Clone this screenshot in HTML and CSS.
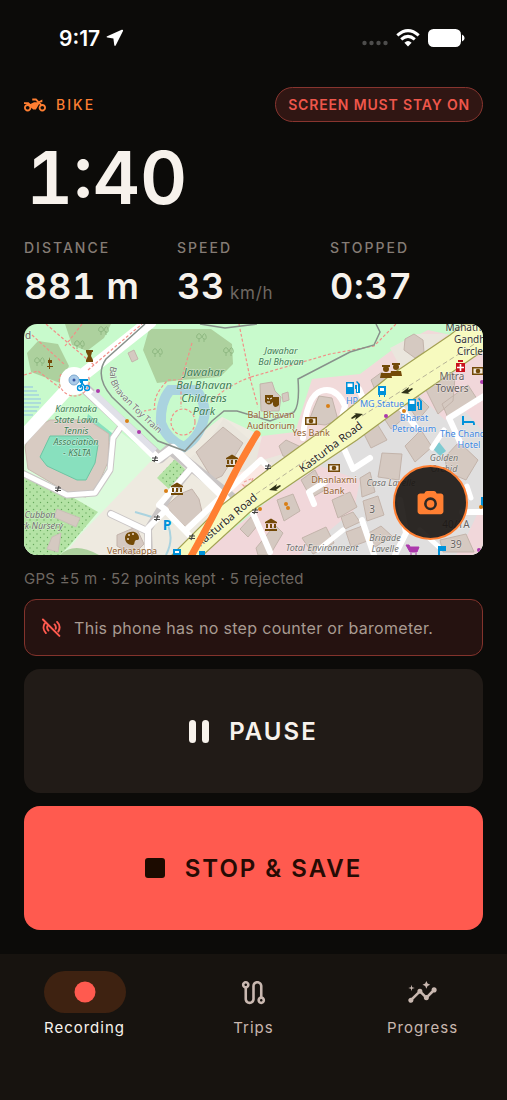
FILE: index.html
```
<!DOCTYPE html>
<html lang="en">
<head>
  <meta charset="UTF-8" />
  <meta name="viewport" content="width=device-width, initial-scale=1.0"/>
  <title>Recording</title>
  <link rel="stylesheet" href="styles.css">
</head>
<body>

<div class="status-bar">
  <div class="clock">
    9:17
    <svg width="18" height="18" viewBox="0 0 18 18"><path d="M15.700 .8 1.200 7.300q-1.300.8.200 1.300l6 .9.900 6.700q.6 1.500 1.500.1L17 2Q17.400.3 15.700.8z" fill="#fff"/></svg>
  </div>
  <div class="signals">
    <svg width="26" height="18" viewBox="0 0 26 18" fill="#4e4d4c">
      <circle cx="2.500" cy="14" r="2.200"/><circle cx="9.500" cy="14" r="2.200"/><circle cx="16.500" cy="14" r="2.200"/><circle cx="23.500" cy="14" r="2.200"/>
    </svg>
    <svg width="24" height="18" viewBox="0 0 24 18" fill="none" stroke="#fff" stroke-width="3">
      <path d="M1.300 6.400Q12-3.200 22.700 6.400M5.200 10.400Q12 4.400 18.800 10.400"/>
      <path d="M8.400 13.800Q12 10.200 15.600 13.800L12 17.600z" fill="#fff" stroke="none"/>
    </svg>
    <svg width="37" height="18" viewBox="0 0 37 18" fill="#fff"><rect width="33" height="18" rx="5.500"/><path d="M34 5.500q2.600 1 2.600 3.500T34 12.500z"/></svg>
  </div>
</div>

<main class="screen">
  <div class="top-row">
    <div class="mode">
      <svg width="22" height="22" viewBox="0 0 24 24" fill="currentColor"><path d="M20 11c-.18 0-.36.03-.53.05L17.410 9H20V6l-3.720 1.860L13.410 5H9v2h3.590l2 2H11l-4 2-2-2H0v2h4c-2.210 0-4 1.790-4 4s1.790 4 4 4 4-1.790 4-4l2 2h3l3.490-6.100 1.010 1.010C16.590 12.640 16 13.750 16 15c0 2.210 1.790 4 4 4s4-1.790 4-4-1.790-4-4-4zM4 17c-1.100 0-2-.9-2-2s.9-2 2-2 2 .9 2 2-.9 2-2 2zm16 0c-1.100 0-2-.9-2-2s.9-2 2-2 2 .9 2 2-.9 2-2 2z"/></svg>
      BIKE
    </div>
    <div class="badge">SCREEN MUST STAY ON</div>
  </div>

  <div class="timer">1:40</div>

  <div class="stats">
    <div class="stat"><div class="label">DISTANCE</div><div class="value">881 m</div></div>
    <div class="stat"><div class="label">SPEED</div><div class="value">33<span class="unit">km/h</span></div></div>
    <div class="stat"><div class="label">STOPPED</div><div class="value">0:37</div></div>
  </div>

  <div class="map">
    <svg class="map-tiles" viewBox="24 324 459 231" preserveAspectRatio="xMidYMid slice">
      <defs>
        <pattern id="plants" width="7" height="7" patternUnits="userSpaceOnUse"><rect width="7" height="7" fill="#b4e3a5"/><circle cx="2" cy="2" r=".7" fill="#66a85c"/><circle cx="5.500" cy="5.500" r=".7" fill="#66a85c"/></pattern>
        <g id="museum" fill="#734a08"><path d="M-6-3 0-6.500 6-3v1.300H-6zM-5-1h2v4h-2zM-1-1h2v4h-2zM3-1h2v4H3zM-6 4H6v2H-6z"/></g>
        <g id="bank"><rect x="-6" y="-4" width="12" height="8" fill="#734a08"/><rect x="-4.500" y="-2.500" width="9" height="5" fill="#f4e9dc"/><circle r="2.300" fill="#734a08"/></g>
        <g id="fuel" fill="#0092da"><path d="M-6-6h8V6h-8zM3-3h2v7h1v-8L4-6l1-1 3 3v9H4V1H3z"/><path d="M-4.500-4.500h5V-1h-5z" fill="#fff"/></g>
        <g id="gate" stroke="#444" stroke-width="1.200"><path d="M-3-1h6M-3 1.500h6M-1 3 1-3"/></g>
        <g id="tree" fill="none" stroke="#8fb882"><path d="M0 4V0M0 1q-4-1-2-4t4 0-2 4M5 4V1q-3-1-1-4t3 1-2 3"/></g>
        <path id="train-line" d="M111 366Q106 380 118 394 134 412 168 442"/>
      </defs>

      <!-- land -->
      <rect x="24" y="324" width="460" height="231" fill="#c8facc"/>
      <path d="M118 430 160 463 80 555H24V430z" fill="#dcfbdc"/>
      <path d="M24 470 60 490 98 512 70 545 60 555H24z" fill="url(#plants)"/>
      <path d="M150 462 80 535 64 555H200L290 470 260 435 222 417 180 450z" fill="#eeeae0"/>
      <path d="M205 446 224 418 250 440 300 452 265 486 232 500 185 462z" fill="#eae6dd"/>
      <path d="M157 478 175 459 190 474 170 490z" fill="url(#plants)"/>
      <path d="M60 555q14-14 39 0z" fill="#add19e"/>
      <path d="M200 555 300 476 484 345V555z" fill="#e0dfdf"/>
      <path d="M256 462 262 436 295 432 312 379 360 374 400 344 428 330 455 336 330 440z" fill="#f1dada"/>
      <path d="M390 348 417 334 448 334 402 370z" fill="#eae6dd"/>
      <path d="M202 555 265 503 320 466 360 480 354 510 300 555zM420 396 462 364 484 350V432L462 408 445 420z" fill="#f1d7da"/>
      <path d="M465 540 484 500V555H456z" fill="#f1d7da"/>
      <path d="M229 476 272 462 258 480 235 498z" fill="#fbe8e4"/>

      <!-- woods and water -->
      <g fill="#add19e">
        <path d="M27 353 38 341 58 344 69 366 60 383 31 372z"/>
        <path d="M65 324H111L104 338 87 351 72 345z"/>
        <path d="M149 329H211L232 344 233 364 220 377 181 380 157 383 143 350z"/>
      </g>
      <use href="#tree" x="37" y="362"/><use href="#tree" x="77" y="345"/><use href="#tree" x="101" y="331"/><use href="#tree" x="155" y="353"/><use href="#tree" x="199" y="338"/><use href="#tree" x="226" y="352"/>
      <path d="M170 390Q160 402 161 423 167 440 184 447 202 436 205 412 203 397 196 390z" fill="#c8facc" stroke="#aad3df" stroke-width="10"/>
      <path d="M135 512q11 3 20 6M168 525q6 15-2 30" fill="none" stroke="#aad3df" stroke-width="2"/>
      <path d="M24 387h9M24 391h13M24 395h15M24 399h17M24 403h17M24 407h15M24 411h13M24 415h9" stroke="#91bfe6" stroke-width="1"/>

      <!-- tennis stadium -->
      <path d="M88 414 112 433 112 445 100 430 86 422z" fill="#88e0be"/>
      <path d="M25 447 31 430 50 420 88 420 109 434 108 462 97 487 86 497 72 495 28 469z" fill="#d8cbc2" stroke="#c9b8af"/>
      <path d="M40 457 50 436 62 436 90 436 98 445 95 463 86 480 77 480 47 466z" fill="#88e0be" stroke="#6dc5a3"/>

      <!-- buildings -->
      <g fill="#d5c9c1" stroke="#c3b4ab" stroke-width="1">
        <path d="M128 353 134 350 138 359 132 362zM196 452 223 427 243 443 222 476 213 480zM166 506 180 494 192 489 199 499 203 516 186 527 178 520zM117 535 136 527 144 544 133 555 117 546z"/>
        <path d="M260 384 272 382 275 391 281 397 279 411 261 411zM282 394 288 392 289 400 283 402zM314 408 319 396 332 398 338 420 325 425 308 423zM279 446 286 440 301 447 294 458 283 456z"/>
        <path d="M405 339 414 334 423 340 424 352 415 358 404 350zM371 380 382 372 399 389 380 402z"/>
        <path d="M240 529 252 516 258 525 248 537zM277 500 293 494 300 511 284 521zM256 548 275 525 283 533 270 555H258z"/>
        <path d="M302 538 326 527 334 543 313 554zM301 480 315 470 325 490 311 498zM332 500 350 492 357 507 338 518zM341 517 353 512 360 522 345 529zM346 532 365 525 370 540 351 547zM363 501 378 496 384 515 367 521z"/>
        <path d="M382 453 402 454 399 480 378 477zM360 478 370 472 375 492 362 497zM363 432 376 422 387 440 371 448zM380 412 394 401 404 418 391 429zM407 404 418 396 429 407 418 420zM425 388 446 366 455 377 453 401 438 414zM442 404 468 385 479 402 449 420z"/>
        <path d="M405 446 421 430 432 447 415 462zM445 457 459 442 478 460 466 480 447 472zM365 535 381 526 392 536 375 547zM440 540 466 534 474 552H443z"/>
      </g>
      <path d="M432 448 439 442 446 451 440 456z" fill="#7fcbd2"/>
      <g fill="#d5c9c1" stroke="#c9bfb7"><path d="M57 509 80 518 76 527 54 517zM52 537 61 533 58 552 47 549z"/></g>

      <!-- minor roads -->
      <g fill="none" stroke="#c9c5c5" stroke-linejoin="round" stroke-linecap="round">
        <path d="M78 382 160 458 170 449 234 500M147 324 74 382 22 440" stroke-width="11"/>
        <path d="M24 474 67 495 95 493 110 470 113 438 120 428" stroke-width="7"/>
        <path d="M111 514 147 531 170 494 193 466M148 531 149 555" stroke-width="8"/>
      </g>
      <g fill="none" stroke="#fff" stroke-linejoin="round" stroke-linecap="round">
        <path d="M150 322 74 382 20 440" stroke-width="13"/>
        <path d="M82 386 158 459 173 448 226 499" stroke-width="8"/>
        <path d="M24 474 67 495 95 493 110 470 113 438 120 428" stroke-width="5"/>
        <path d="M111 514 147 531M148 555V528L166 510 159 505 193 466M160 505 190 536" stroke-width="6"/>
        <path d="M186 530 237 482 261 460 270 469M252 511 270 552M303 438Q306 396 321 391T345 406L341 420" stroke-width="6"/>
        <path d="M359 389 371 417 360 425M397 403 416 427M449 418 484 396M449 418 460 442M342 444 353 469 370 458M362 520 374 555M400 500 406 533 395 555M314 504 309 492 325 482M462 512H484" stroke-width="6"/>
        <path d="M318 550 343 530M432 448 444 430M420 530 440 548M467 486 471 498" stroke-width="5"/>
      </g>
      <path d="M93 392 155 451" fill="none" stroke="#e0e0e8" stroke-width="6"/>
      <circle cx="74" cy="381" r="14" fill="#fff"/>
      <circle cx="74" cy="380" r="5" fill="#aacbe9" stroke="#7eaad0"/><circle cx="74" cy="380" r="1.500" fill="#3552a0"/>

      <!-- footpaths and toy train -->
      <g fill="none" stroke="#f28f87" stroke-width="1.200" stroke-dasharray="3 2">
        <path d="M32 335 64 364M46 324 94 365M24 375 38 371 60 388M82 324 65 346M88 370 129 335 142 324M239 324 250 378 258 407M251 377 330 354 374 346 396 324M192 343 181 381 181 407M251 377Q224 387 210 403M181 380H168Q152 396 155 409L144 411"/>
        <ellipse cx="183" cy="422" rx="12" ry="13"/>
        <path d="M61 374a15 15 0 1 0 27 1"/>
        <path d="M244 482l9-4-3 8-7-1 4 4" stroke="#f3a39b"/>
      </g>
      <path d="M145 324 125 342 106 359Q94 376 112 397L158 441 185 451 212 421 224 411 237 411 270 421 294 412Q300 405 298 379L350 352 374 345 380 332 376 324M200 324 225 328 257 324" fill="none" stroke="#88918b" stroke-width="1.500"/>

      <!-- Kasturba Road -->
      <path d="M171 556 222 505 270 468 325 428 388 377 450 335 464 324H484V350L402 407 357 440 300 478 250 512 202 556z" fill="#f7fabf" stroke="#a3a254" stroke-width="1.200"/>
      <path d="M256 494 306 460M362 416 476 343" stroke="#b7b497" stroke-dasharray="5 3"/>
      <g fill="#2f3218"><path d="M269 490l8-6-1 3 4-2 1 1-5 4 2 1zM401 393l8-6-1 3 4-2 1 1-5 4 2 1zM363 414l-8 6 1-3-4 2-1-1 5-4-2-1z"/></g>

      <!-- pins -->
      <use href="#museum" x="177" y="489"/><use href="#museum" x="232" y="461"/><use href="#museum" x="271" y="525"/>
      <use href="#bank" x="311" y="421"/><use href="#bank" x="334" y="468"/><use href="#bank" x="478" y="371"/>
      <use href="#fuel" x="352" y="388"/><use href="#fuel" x="414" y="405"/>
      <use href="#gate" x="58" y="489"/><use href="#gate" x="155" y="459"/><use href="#gate" x="268" y="467"/><use href="#gate" x="255" y="511"/><use href="#gate" x="157" y="518"/><use href="#gate" x="192" y="537"/>
      <g fill="#734a08">
        <path d="M86 350h7v2h-1l-1 4 2 4v2h-7v-2l2-4-2-4zM49 357l1 3h2v3h-2v6h-1v-6h-1v-3h1zM47 366h6v1h-6z"/>
        <path d="M265 395h8v7q-4 5-8 0zM273 397h6v8q-4 4-6 0z"/>
        <path d="M131 532c4-1 8 2 8 6 0 3-3 1-4 3s0 4-3 4c-4 0-7-3-7-7s3-6 6-6z"/>
        <circle cx="386" cy="369" r="3"/><path d="M382 365h8v2h-8zM381 373h10l1 5h-12z"/><circle cx="396" cy="367" r="3"/><path d="M392 363h8v2h-8zM391 371h10l1 5h-12z"/>
      </g>
      <path d="M267 398l2 1m1 0 2-1M267 402h3" stroke="#fff" fill="none"/>
      <g fill="#edd9c8"><circle cx="129" cy="535" r="1"/><circle cx="133" cy="534" r="1"/><circle cx="128" cy="539" r="1"/></g>
      <g fill="#0092da">
        <path d="M378 386h8v9h-1v2h-1v-2h-4v2h-1v-2h-1zM462 416h2v5h9q2 0 2 4h-2v-2h-9v2h-2z"/>
        <path d="M79 379h9v2h-5v2h-3zM173 549h8v6h-8zM199 551h6v4h-6zM481 497h4v11h-4zM438 546h8v5h-6v4h-2z"/>
      </g>
      <path d="M380 388h4v3h-4zM175 551h4v2h-4z" fill="#fff"/>
      <g fill="none" stroke="#0092da" stroke-width="1.400"><circle cx="80" cy="388" r="2.500"/><circle cx="87" cy="388" r="2.500"/><path d="M80 388l2-5 4 5"/></g>
      <path d="M456 363h9v9h-9zM458 360h5v2h-5z" fill="#c9121d"/><path d="M460.500 364v7M457 367.500h7" stroke="#fff" stroke-width="1.600"/>
      <path d="M406 545h3l1 2h9l-2 5h-7zM410 554h2m3 0h2" fill="#ac39ac" stroke="#ac39ac"/>
      <g fill="#ac39ac"><circle cx="98" cy="391" r="2"/><circle cx="139" cy="432" r="2"/><circle cx="386" cy="416" r="2"/><circle cx="482" cy="382" r="2"/><circle cx="479" cy="550" r="2"/></g>
      <g fill="#d97f16"><circle cx="127" cy="421" r="2"/><circle cx="166" cy="491" r="2"/><circle cx="328" cy="406" r="2"/><circle cx="404" cy="411" r="2"/><circle cx="286" cy="504" r="2"/><circle cx="288" cy="508" r="2"/><circle cx="260" cy="509" r="2"/><circle cx="481" cy="507" r="2"/></g>

      <!-- labels -->
      <g class="park-label">
        <text x="76" y="412">Karnataka</text><text x="76" y="423">State Lawn</text><text x="76" y="434">Tennis</text><text x="76" y="445">Association</text><text x="77" y="456">- KSLTA</text>
        <text x="281" y="354">Jawahar</text><text x="281" y="365">Bal Bhavan</text>
      </g>
      <g class="park-label large">
        <text x="204" y="376">Jawahar</text><text x="204" y="389">Bal Bhavan</text><text x="204" y="402">Childrens</text><text x="204" y="415">Park</text>
      </g>
      <g class="area-label">
        <text x="40" y="518">Cubbon</text><text x="42" y="529">rk Nursery</text>
        <text x="444" y="461">Golden</text><text x="444" y="472">Orchid</text><text x="391" y="486">Casa Lavelle</text>
        <text x="385" y="541">Brigade</text><text x="385" y="552">Lavelle</text><text x="322" y="551">Total Environment</text>
      </g>
      <g class="poi-label">
        <text x="271" y="418">Bal Bhavan</text><text x="271" y="429">Auditorium</text><text x="311" y="436">Yes Bank</text>
        <text x="334" y="483">Dhanlaxmi</text><text x="334" y="494">Bank</text><text x="132" y="554">Venkatappa</text>
      </g>
      <g class="transit-label">
        <text x="352" y="404">HP</text><text x="382" y="407">MG Statue</text><text x="414" y="421">Bharat</text><text x="414" y="432">Petroleum</text>
        <text x="462" y="437">The Chanc</text><text x="469" y="448">Hotel</text>
      </g>
      <g class="place-label">
        <text x="452" y="380">Mitra</text><text x="452" y="392">Towers</text><text x="372" y="513">3</text><text x="456" y="548">39</text><text x="456" y="528">40/1A</text><text x="28" y="339">d</text>
      </g>
      <text class="train"><textPath href="#train-line">Bal Bhavan Toy Train</textPath></text>
      <g class="circle-label"><text x="468" y="331">Mahatma</text><text x="471" y="343">Gandhi</text><text x="470" y="355">Circle</text></g>
      <g class="road-label"><text x="229" y="523" transform="rotate(-40 229 523)">Kasturba Road</text><text x="333" y="450" transform="rotate(-37 333 450)">Kasturba Road</text></g>
      <text x="167" y="530" class="parking">P</text>

      <!-- recorded track -->
      <path d="M257 434Q240 461 226 490T189 560" fill="none" stroke="#ff7f32" stroke-width="7" stroke-linecap="round"/>
    </svg>
    <button class="camera" aria-label="Take photo">
      <svg width="31" height="31" viewBox="0 0 24 24"><path d="M20 5h-3.200l-.8-1.300c-.3-.5-.8-.7-1.400-.7H9.400c-.6 0-1.100.2-1.400.7L7.200 5H4c-1.100 0-2 .9-2 2v12c0 1.100.9 2 2 2h16c1.100 0 2-.9 2-2V7c0-1.100-.9-2-2-2z" fill="#ff7f32"/><circle cx="12" cy="13" r="4" fill="none" stroke="#2c2825" stroke-width="2"/></svg>
    </button>
  </div>

  <p class="gps">GPS ±5 m · 52 points kept · 5 rejected</p>

  <div class="notice">
    <svg width="21" height="21" viewBox="0 0 24 24" fill="none" stroke="#ff5a4f" stroke-width="2.200" stroke-linecap="round"><path d="M2.200 2.800 21 21.600M4.200 7.400A9 9 0 0 0 5.600 18.400M7.400 10.200A5 5 0 0 0 8.500 15.500M18.400 5.600A9 9 0 0 1 19.800 16.500M15.500 8.500A5 5 0 0 1 16.800 13.400"/></svg>
    <span>This phone has no step counter or barometer.</span>
  </div>

  <button class="action pause">
    <svg width="20" height="23" viewBox="0 0 20 23" fill="currentColor"><rect width="7" height="23" rx="3.500"/><rect x="13" width="7" height="23" rx="3.500"/></svg>
    PAUSE
  </button>
  <button class="action stop">
    <svg width="20" height="20" viewBox="0 0 20 20" fill="#1c0b00"><rect width="20" height="20" rx="3"/></svg>
    STOP &amp; SAVE
  </button>
</main>

<nav class="tabs">
  <a href="#recording" class="tab active">
    <span class="tab-icon"><svg width="22" height="22" viewBox="0 0 22 22"><circle cx="11" cy="11" r="10.500" fill="#ff5a4f"/></svg></span>
    Recording
  </a>
  <a href="#trips" class="tab">
    <span class="tab-icon"><svg width="31" height="31" viewBox="0 0 24 24" fill="currentColor"><path d="M19 15.180V7c0-2.210-1.790-4-4-4s-4 1.790-4 4v10c0 1.100-.9 2-2 2s-2-.9-2-2V8.820C8.160 8.400 9 7.300 9 6c0-1.660-1.340-3-3-3S3 4.340 3 6c0 1.300.84 2.400 2 2.820V17c0 2.210 1.790 4 4 4s4-1.790 4-4V7c0-1.100.9-2 2-2s2 .9 2 2v8.180c-1.160.41-2 1.510-2 2.820 0 1.660 1.340 3 3 3s3-1.340 3-3c0-1.300-.84-2.400-2-2.820zM6 7c-.55 0-1-.45-1-1s.45-1 1-1 1 .45 1 1-.45 1-1 1zm12 12c-.55 0-1-.45-1-1s.45-1 1-1 1 .45 1 1-.45 1-1 1z"/></svg></span>
    Trips
  </a>
  <a href="#progress" class="tab">
    <span class="tab-icon"><svg width="31" height="31" viewBox="0 0 24 24" fill="currentColor"><path d="M21 8c-1.450 0-2.260 1.440-1.930 2.510l-3.550 3.560c-.3-.09-.74-.09-1.040 0l-2.550-2.550C12.270 10.450 11.460 9 10 9c-1.450 0-2.270 1.440-1.930 2.520l-4.560 4.550C2.440 15.740 1 16.550 1 18c0 1.100.9 2 2 2 1.450 0 2.260-1.440 1.930-2.510l4.550-4.560c.3.090.74.090 1.040 0l2.550 2.550C12.730 16.550 13.540 18 15 18c1.450 0 2.270-1.440 1.930-2.520l3.560-3.550C21.560 12.260 23 11.450 23 10c0-1.100-.9-2-2-2zM15 9l.94-2.070L18 6l-2.060-.93L15 3l-.92 2.070L12 6l2.080.93zM3.500 11 4 9l2-.5L4 8l-.5-2L3 8l-2 .5L3 9z"/></svg></span>
    Progress
  </a>
</nav>

</body>
</html>
```
FILE: styles.css
```
* {
  box-sizing: border-box;
}

body {
  margin: 0;
  min-height: 100vh;
  display: flex;
  flex-direction: column;
  background-color: #0c0b09;
  color: #f7f2ec;
  font-family: Inter, 'Liberation Sans', sans-serif;
}

svg {
  display: block;
  flex-shrink: 0;
}

button {
  font-family: inherit;
  border: none;
  cursor: pointer;
}

.status-bar {
  display: flex;
  justify-content: space-between;
  align-items: center;
  height: 76px;
  padding: 0 42px 0 59px;
}

.clock {
  display: flex;
  align-items: center;
  gap: 6px;
  color: #fff;
  font-size: 21px;
  font-weight: 600;
}

.signals {
  display: flex;
  align-items: center;
  gap: 8px;
}

.screen {
  flex: 1;
  padding: 11px 24px 24px;
}

.top-row {
  display: flex;
  justify-content: space-between;
  align-items: center;
}

.mode {
  display: flex;
  align-items: center;
  gap: 10px;
  color: #ff7f32;
  font-size: 14px;
  font-weight: 500;
  letter-spacing: 2px;
}

.badge {
  padding: 0 12px;
  border: 1px solid #88352f;
  border-radius: 18px;
  background-color: #301613;
  color: #ee564b;
  font-size: 14px;
  line-height: 33px;
  font-weight: 600;
  letter-spacing: 0.06em;
}

.timer {
  margin-top: 18px;
  padding-left: 2px;
  font-size: 73px;
  line-height: 76px;
  font-weight: 600;
  font-variant-numeric: tabular-nums;
}

.stats {
  display: grid;
  grid-template-columns: repeat(3, 1fr);
  margin-top: 22px;
}

.label {
  color: #857c75;
  font-size: 14px;
  line-height: 20px;
  font-weight: 500;
  letter-spacing: 2px;
}

.value {
  margin-top: 6px;
  font-size: 36px;
  line-height: 44px;
  font-weight: 600;
  letter-spacing: 0.02em;
  font-variant-numeric: tabular-nums;
  white-space: nowrap;
}

.unit {
  margin-left: 5px;
  color: #6f6862;
  font-size: 17px;
  font-weight: 400;
}

.map {
  position: relative;
  height: 231px;
  margin-top: 9px;
  border-radius: 13px;
  overflow: hidden;
}

.map-tiles {
  width: 100%;
  height: 100%;
  font-family: 'Noto Sans', sans-serif;
  font-size: 9px;
  text-anchor: middle;
}

.map-tiles text {
  paint-order: stroke;
  stroke: rgba(255, 255, 255, 0.5);
  stroke-width: 1px;
}

.park-label {
  fill: #3b7c52;
  font-style: italic;
}

.park-label.large {
  font-size: 11px;
}

.area-label {
  fill: #70706c;
  font-style: italic;
}

.poi-label {
  fill: #94622f;
}

.transit-label {
  fill: #3d86e0;
}

.place-label {
  fill: #66605d;
  font-size: 10px;
}

.train {
  fill: #777;
  text-anchor: start;
}

.circle-label {
  fill: #333;
  font-size: 10px;
}

.road-label {
  fill: #2d2c20;
  font-size: 11px;
}

.parking {
  fill: #0092da;
  font-size: 14px;
  font-weight: 700;
}

.camera {
  position: absolute;
  right: 15px;
  bottom: 15px;
  display: flex;
  align-items: center;
  justify-content: center;
  width: 75px;
  height: 75px;
  padding: 0;
  border: 2px solid #ff7f32;
  border-radius: 50%;
  background-color: rgba(24, 20, 17, 0.9);
}

.gps {
  margin: 14px 0 10px;
  color: #6f6862;
  font-size: 15px;
  line-height: 20px;
  letter-spacing: 0.02em;
}

.notice {
  display: flex;
  align-items: center;
  gap: 12px;
  min-height: 57px;
  padding: 0 16px;
  border: 1px solid #83332c;
  border-radius: 12px;
  background-color: #251210;
  color: #a99b92;
  font-size: 16px;
  letter-spacing: 0.02em;
}

.action {
  display: flex;
  align-items: center;
  justify-content: center;
  gap: 20px;
  width: 100%;
  height: 124px;
  margin-top: 13px;
  border-radius: 16px;
  font-size: 24px;
  font-weight: 600;
  letter-spacing: 2px;
}

.pause {
  background-color: #211b17;
  color: #f7f2ec;
}

.stop {
  background-color: #ff5a4f;
  color: #260b04;
}

.tabs {
  display: grid;
  grid-template-columns: repeat(3, 1fr);
  min-height: 147px;
  padding-top: 17px;
  background-color: #17130f;
}

.tab {
  display: flex;
  flex-direction: column;
  align-items: center;
  gap: 5px;
  color: #c9b8b0;
  font-size: 15px;
  line-height: 20px;
  letter-spacing: 1px;
  text-decoration: none;
}

.tab-icon {
  display: flex;
  align-items: center;
  justify-content: center;
  width: 82px;
  height: 42px;
  border-radius: 21px;
}

.active {
  color: #f7f2ec;
}

.active .tab-icon {
  background-color: #3e2211;
}
```
